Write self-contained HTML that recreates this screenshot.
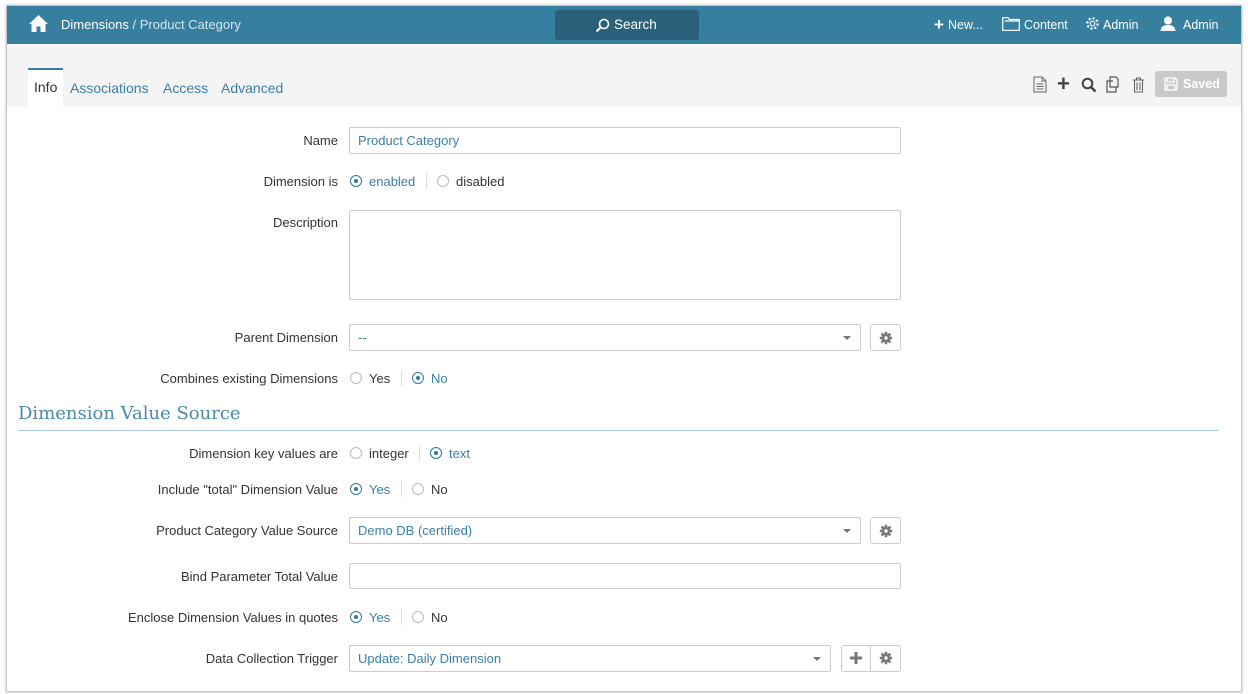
<!DOCTYPE html>
<html><head><style>
body{margin:0;width:1248px;height:694px;background:#fff;font-family:"Liberation Sans",sans-serif;font-size:13px;color:#333;position:relative;overflow:hidden}
.win{position:absolute;left:7px;top:6px;width:1234px;height:685px;background:#fff;box-shadow:0 0 2px 1px #aaa}
.nav{position:absolute;left:0;top:0;width:1234px;height:38px;background:#367f9e;color:#fff}
.tabs{position:absolute;left:0;top:38px;width:1234px;height:63px;background:#f4f4f4}
.a{position:absolute}
.lbl{position:absolute;right:910px;text-align:right;white-space:nowrap;color:#333}
.inp{position:absolute;left:349px;border:1px solid #ccc;border-radius:2px;background:#fff;box-sizing:border-box;color:#3a7fa8;padding:6px 8px}
.r{position:absolute;width:12px;height:12px;border:1px solid #bbb;border-radius:50%;box-sizing:border-box}
.r.on{border-color:#2d7aa3}
.r.on:after{content:"";position:absolute;left:3px;top:3px;width:4px;height:4px;border-radius:50%;background:#2d7aa3}
.rt{position:absolute;white-space:nowrap}
.sep{position:absolute;width:1px;height:16px;background:#ddd}
.btn{position:absolute;border:1px solid #ccc;border-radius:3px;background:#fff;box-sizing:border-box;height:27px}
.caret{position:absolute;right:9px;top:11px;width:0;height:0;border-left:4px solid transparent;border-right:4px solid transparent;border-top:4px solid #777}
</style></head><body>
<svg width="0" height="0" style="position:absolute"><defs><g id="cog"><circle cx="7" cy="7" r="4.3" fill="#777"/><g stroke="#777" stroke-width="2.6"><path d="M7 0.8V13.2M0.8 7H13.2M2.6 2.6L11.4 11.4M11.4 2.6L2.6 11.4"/></g><circle cx="7" cy="7" r="1.7" fill="#fff"/></g></defs></svg>
<div class="win">
<div class="nav">
<svg class="a" style="left:21px;top:8px" width="21" height="19" viewBox="0 0 21 19"><path d="M10.5 1 L1 10 L3.5 10 L3.5 18 L8.5 18 L8.5 12.5 L12.5 12.5 L12.5 18 L17.5 18 L17.5 10 L20 10 Z" fill="#fff"/></svg>
<div class="a" style="left:54px;top:11px;font-size:13px">Dimensions <span style="color:#d5e6ee">/ Product Category</span></div>
<div class="a" style="left:548px;top:4px;width:144px;height:30px;background:#2a6079;border-radius:3px"></div>
<svg class="a" style="left:588px;top:12px" width="15" height="15" viewBox="0 0 15 15"><circle cx="9" cy="6" r="4.5" fill="none" stroke="#fff" stroke-width="1.6"/><path d="M5.8 9.2 L1.5 13.5" stroke="#fff" stroke-width="2"/></svg>
<div class="a" style="left:607px;top:11px;font-size:13.5px">Search</div>
<div class="a" style="left:927px;top:9px;font-size:17px;font-weight:bold">+</div>
<div class="a" style="left:941px;top:12px;font-size:12.5px">New...</div>
<svg class="a" style="left:995px;top:11px" width="18" height="14" viewBox="0 0 18 14"><path d="M0.7 0.7 H6 L7.5 2.5 H17.3 V13.3 H0.7 Z M2.5 4 H17.3" fill="none" stroke="#fff" stroke-width="1.2"/></svg>
<div class="a" style="left:1017px;top:12px;font-size:12.5px">Content</div>
<svg class="a" style="left:1078px;top:10px" width="15" height="15" viewBox="0 0 16 16"><circle cx="8" cy="8" r="2.5" fill="none" stroke="#fff" stroke-width="1.2"/><circle cx="8" cy="8" r="5.5" fill="none" stroke="#fff" stroke-width="2.4" stroke-dasharray="2.2 2.1"/></svg>
<div class="a" style="left:1096px;top:12px;font-size:12.5px">Admin</div>
<svg class="a" style="left:1153px;top:10px" width="16" height="15" viewBox="0 0 16 15"><circle cx="8" cy="4.5" r="4" fill="#fff"/><path d="M0.5 15 C1 10 4 9 8 9 C12 9 15 10 15.5 15 Z" fill="#fff"/></svg>
<div class="a" style="left:1176px;top:12px;font-size:12.5px">Admin</div>
</div>
<div class="tabs">
<div class="a" style="left:21px;top:24px;width:35px;height:39px;background:#fff;border-top:2px solid #367f9e;box-sizing:border-box"></div>
<div class="a" style="left:27px;top:35px;font-size:14px;color:#333">Info</div>
<div class="a" style="left:63px;top:36px;font-size:14px;color:#3a7fa8">Associations</div>
<div class="a" style="left:156px;top:36px;font-size:14px;color:#3a7fa8">Access</div>
<div class="a" style="left:214px;top:36px;font-size:14px;color:#3a7fa8">Advanced</div>
<svg class="a" style="left:1026px;top:32px" width="14" height="17" viewBox="0 0 14 17"><path d="M1 1 H9 L13 5 V16 H1 Z M9 1 V5 H13 M3.5 8 H10.5 M3.5 10.5 H10.5 M3.5 13 H10.5" fill="none" stroke="#666" stroke-width="1"/></svg>
<div class="a" style="left:1050px;top:27px;font-size:22px;font-weight:bold;color:#444">+</div>
<svg class="a" style="left:1074px;top:33px" width="16" height="16" viewBox="0 0 16 16"><circle cx="6.5" cy="6.5" r="4.8" fill="none" stroke="#444" stroke-width="2"/><path d="M10 10 L14.5 14.5" stroke="#444" stroke-width="2.6"/></svg>
<svg class="a" style="left:1099px;top:32px" width="17" height="17" viewBox="0 0 17 17"><path d="M4 1 H10 L12 3 V11 H4 Z M7 5 H1 V16 H10 V11" fill="none" stroke="#555" stroke-width="1.2"/></svg>
<svg class="a" style="left:1125px;top:33px" width="13" height="16" viewBox="0 0 13 16"><path d="M1 3 H12 M4.5 3 V1 H8.5 V3 M2.5 3 V15 H10.5 V3 M5 5.5 V13 M8 5.5 V13" fill="none" stroke="#666" stroke-width="1.1"/></svg>
<div class="a" style="left:1148px;top:27px;width:72px;height:26px;background:#c9c9c9;border-radius:3px"></div>
<svg class="a" style="left:1157px;top:33px" width="14" height="14" viewBox="0 0 14 14"><path d="M1 1 H11 L13 3 V13 H1 Z M3.5 1 V5 H10 V1 M3 8 H11 V13 H3 Z" fill="none" stroke="#fff" stroke-width="1.3"/></svg>
<div class="a" style="left:1176px;top:33px;font-size:12.5px;color:#fff;font-weight:bold">Saved</div>
</div>
</div>

<div class="lbl" style="top:133px">Name</div>
<div class="inp" style="top:127px;width:552px;height:27px;line-height:13px">Product Category</div>

<div class="lbl" style="top:174px">Dimension is</div>
<div class="r on" style="left:350px;top:175px"></div><div class="rt" style="left:369px;top:174px;color:#3a7fa8">enabled</div>
<div class="sep" style="left:426px;top:173px"></div>
<div class="r" style="left:437px;top:175px"></div><div class="rt" style="left:456px;top:174px">disabled</div>

<div class="lbl" style="top:215px">Description</div>
<div class="inp" style="top:210px;width:552px;height:90px"></div>

<div class="lbl" style="top:330px">Parent Dimension</div>
<div class="inp" style="top:324px;width:512px;height:27px;line-height:13px">--<span class="caret"></span></div>
<div class="btn" style="left:870px;top:324px;width:31px"><svg style="position:absolute;left:8px;top:6px" width="14" height="14"><use href="#cog"/></svg></div>

<div class="lbl" style="top:371px">Combines existing Dimensions</div>
<div class="r" style="left:350px;top:372px"></div><div class="rt" style="left:369px;top:371px">Yes</div>
<div class="sep" style="left:401px;top:370px"></div>
<div class="r on" style="left:412px;top:372px"></div><div class="rt" style="left:431px;top:371px;color:#3a7fa8">No</div>

<div class="a" style="left:18px;top:403px;font-family:'DejaVu Serif','Liberation Serif',serif;font-size:18px;color:#4a88ad">Dimension Value Source</div>
<div class="a" style="left:18px;top:430px;width:1201px;height:1px;background:#a9cad8"></div>

<div class="lbl" style="top:446px">Dimension key values are</div>
<div class="r" style="left:350px;top:447px"></div><div class="rt" style="left:369px;top:446px">integer</div>
<div class="sep" style="left:419px;top:445px"></div>
<div class="r on" style="left:430px;top:447px"></div><div class="rt" style="left:449px;top:446px;color:#3a7fa8">text</div>

<div class="lbl" style="top:482px">Include "total" Dimension Value</div>
<div class="r on" style="left:350px;top:483px"></div><div class="rt" style="left:369px;top:482px;color:#3a7fa8">Yes</div>
<div class="sep" style="left:401px;top:481px"></div>
<div class="r" style="left:412px;top:483px"></div><div class="rt" style="left:431px;top:482px">No</div>

<div class="lbl" style="top:523px">Product Category Value Source</div>
<div class="inp" style="top:517px;width:512px;height:27px;line-height:13px">Demo DB (certified)<span class="caret"></span></div>
<div class="btn" style="left:870px;top:517px;width:31px"><svg style="position:absolute;left:8px;top:6px" width="14" height="14"><use href="#cog"/></svg></div>

<div class="lbl" style="top:569px">Bind Parameter Total Value</div>
<div class="inp" style="top:563px;width:552px;height:26px"></div>

<div class="lbl" style="top:610px">Enclose Dimension Values in quotes</div>
<div class="r on" style="left:350px;top:611px"></div><div class="rt" style="left:369px;top:610px;color:#3a7fa8">Yes</div>
<div class="sep" style="left:401px;top:609px"></div>
<div class="r" style="left:412px;top:611px"></div><div class="rt" style="left:431px;top:610px">No</div>

<div class="lbl" style="top:651px">Data Collection Trigger</div>
<div class="inp" style="top:645px;width:482px;height:27px;line-height:13px">Update: Daily Dimension<span class="caret"></span></div>
<div class="btn" style="left:841px;top:645px;width:60px"></div>
<div class="a" style="left:870px;top:646px;width:1px;height:25px;background:#ccc"></div>
<svg class="a" style="left:850px;top:652px" width="12" height="12"><path d="M6 0V12M0 6H12" stroke="#777" stroke-width="3"/></svg>
<svg class="a" style="left:879px;top:651px" width="14" height="14"><use href="#cog"/></svg>
</body></html>
